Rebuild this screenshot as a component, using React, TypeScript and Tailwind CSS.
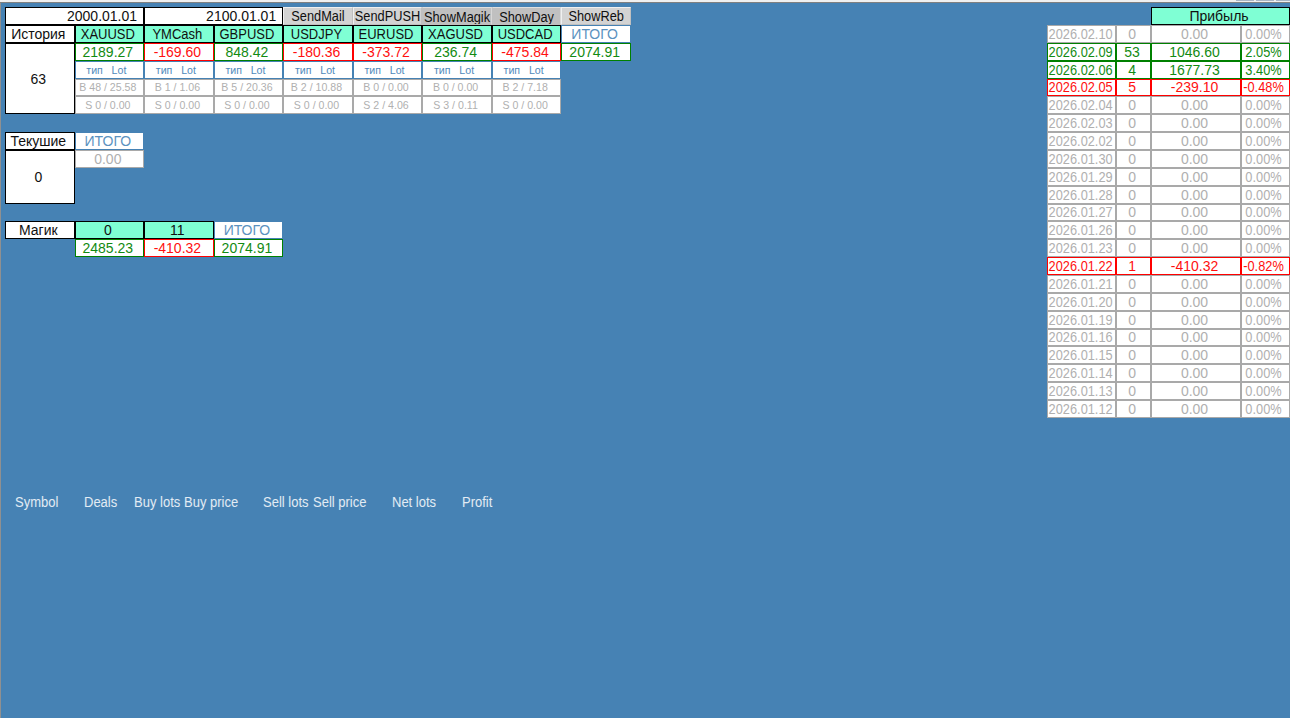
import React from 'react';
import clsx from 'clsx';

type Tone = 'head' | 'plain' | 'profit' | 'loss' | 'muted' | 'total' | 'label';

const toneClass: Record<Tone, string> = {
  head: 'bg-[#7fffd4] border-black text-[#101010]',
  plain: 'bg-white border-black text-[#101010]',
  profit: 'bg-white border-[#008000] text-[#128a12]',
  loss: 'bg-white border-[#ff0000] text-[#ff1010]',
  muted: 'bg-white border-[#a9a9a9] text-[#b0b0b0]',
  total: 'bg-white border-[#4682b4] text-[#5b92c0]',
  label: 'bg-white border-[#4682b4] text-[#5089ba]',
};

const symbols = [
  { name: 'XAUUSD', profit: '2189.27', buy: 'B 48 / 25.58', sell: 'S 0 / 0.00' },
  { name: 'YMCash', profit: '-169.60', buy: 'B 1 / 1.06', sell: 'S 0 / 0.00' },
  { name: 'GBPUSD', profit: '848.42', buy: 'B 5 / 20.36', sell: 'S 0 / 0.00' },
  { name: 'USDJPY', profit: '-180.36', buy: 'B 2 / 10.88', sell: 'S 0 / 0.00' },
  { name: 'EURUSD', profit: '-373.72', buy: 'B 0 / 0.00', sell: 'S 2 / 4.06' },
  { name: 'XAGUSD', profit: '236.74', buy: 'B 0 / 0.00', sell: 'S 3 / 0.11' },
  { name: 'USDCAD', profit: '-475.84', buy: 'B 2 / 7.18', sell: 'S 0 / 0.00' },
];

const days: [string, string, string, string][] = [
  ['2026.02.10', '0', '0.00', '0.00%'],
  ['2026.02.09', '53', '1046.60', '2.05%'],
  ['2026.02.06', '4', '1677.73', '3.40%'],
  ['2026.02.05', '5', '-239.10', '-0.48%'],
  ['2026.02.04', '0', '0.00', '0.00%'],
  ['2026.02.03', '0', '0.00', '0.00%'],
  ['2026.02.02', '0', '0.00', '0.00%'],
  ['2026.01.30', '0', '0.00', '0.00%'],
  ['2026.01.29', '0', '0.00', '0.00%'],
  ['2026.01.28', '0', '0.00', '0.00%'],
  ['2026.01.27', '0', '0.00', '0.00%'],
  ['2026.01.26', '0', '0.00', '0.00%'],
  ['2026.01.23', '0', '0.00', '0.00%'],
  ['2026.01.22', '1', '-410.32', '-0.82%'],
  ['2026.01.21', '0', '0.00', '0.00%'],
  ['2026.01.20', '0', '0.00', '0.00%'],
  ['2026.01.19', '0', '0.00', '0.00%'],
  ['2026.01.16', '0', '0.00', '0.00%'],
  ['2026.01.15', '0', '0.00', '0.00%'],
  ['2026.01.14', '0', '0.00', '0.00%'],
  ['2026.01.13', '0', '0.00', '0.00%'],
  ['2026.01.12', '0', '0.00', '0.00%'],
];

const buttons = [
  { label: 'SendMail', pressed: false },
  { label: 'SendPUSH', pressed: false },
  { label: 'ShowMagik', pressed: true },
  { label: 'ShowDay', pressed: true },
  { label: 'ShowReb', pressed: false },
];

// Column starts are uneven, so every heading carries its own width.
const positionColumns = [
  { label: 'Symbol', className: 'w-[69px]' },
  { label: 'Deals', className: 'w-[50px]' },
  { label: 'Buy lots', className: 'w-[50px]' },
  { label: 'Buy price', className: 'w-[79px]' },
  { label: 'Sell lots', className: 'w-[50px]' },
  { label: 'Sell price', className: 'w-[79px]' },
  { label: 'Net lots', className: 'w-[70px]' },
  { label: 'Profit', className: 'w-[50px]' },
];

const toneOf = (value: string): Tone => {
  const n = parseFloat(value);
  if (n > 0) return 'profit';
  return n < 0 ? 'loss' : 'muted';
};

type CellProps = {
  tone: Tone;
  tall?: boolean;
  className?: string;
  children: React.ReactNode;
};

const valueText = 'justify-center pr-[3px] text-[14px]';
const nameText = 'justify-center pt-[1.4px] pr-[3px] text-[13px]';
const smallText = 'justify-center pr-[3px] text-[10.6px]';

const Cell: React.FC<CellProps> = ({ tone, tall, className = valueText, children }) => (
  <div className={clsx('flex items-center border whitespace-pre leading-none', toneClass[tone], className)}>
    <span className={clsx(tall && 'scale-y-110')}>{children}</span>
  </div>
);

const ChartButton: React.FC<{ label: string; pressed: boolean }> = ({ label, pressed }) => (
  <button
    className={clsx(
      'flex items-center justify-center overflow-hidden border whitespace-nowrap text-[12.8px] leading-none text-[#101010]',
      pressed
        ? 'border-t-[#e0e0e0] border-r-[#d8d8d8] border-b-[#c0c0c0] border-l-[#c0c0c0] bg-[#c0c0c0] pt-[4px]'
        : 'border-t-[#f0f0f0] border-r-[#c0c0c0] border-b-[#c0c0c0] border-l-[#f0f0f0] bg-[#d3d3d3] pt-[2.8px]',
    )}
  >
    <span className="scale-y-110">{label}</span>
  </button>
);

const HistoryTable = () => (
  <div className="grid w-max grid-cols-[repeat(9,69.55px)] auto-rows-[17.87px]">
    <Cell tone="plain" className="col-span-2 justify-end pr-[6px] text-[14px]">2000.01.01</Cell>
    <Cell tone="plain" className="col-span-2 justify-end pr-[6px] text-[14px]">2100.01.01</Cell>
    {buttons.map((b) => (
      <ChartButton key={b.label} label={b.label} pressed={b.pressed} />
    ))}

    <Cell tone="plain">История</Cell>
    {symbols.map((s) => (
      <Cell key={s.name} tone="head" tall className={nameText}>{s.name}</Cell>
    ))}
    <Cell tone="total">ИТОГО</Cell>

    <Cell tone="plain" className={clsx('row-span-4', valueText)}>63</Cell>
    {symbols.map((s) => (
      <Cell key={s.name} tone={toneOf(s.profit)}>{s.profit}</Cell>
    ))}
    <Cell tone="profit">2074.91</Cell>

    {symbols.map((s) => (
      <Cell key={s.name} tone="label" className="justify-center pt-[0.6px] pr-[6px] text-[10.6px]">{'тип   Lot'}</Cell>
    ))}
    {symbols.map((s, i) => (
      <Cell key={s.name} tone="muted" tall className={clsx(smallText, i === 0 && 'col-start-2')}>{s.buy}</Cell>
    ))}
    {symbols.map((s, i) => (
      <Cell key={s.name} tone="muted" tall className={clsx(smallText, i === 0 && 'col-start-2')}>{s.sell}</Cell>
    ))}
  </div>
);

const CurrentTable = () => (
  <div className="mt-[17.87px] grid w-max grid-cols-[repeat(2,69.55px)] auto-rows-[17.87px]">
    <Cell tone="plain">Текушие</Cell>
    <Cell tone="total">ИТОГО</Cell>
    <Cell tone="plain" className={clsx('row-span-3', valueText)}>0</Cell>
    <Cell tone="muted">0.00</Cell>
  </div>
);

const MagicTable = () => (
  <div className="mt-[17.87px] grid w-max grid-cols-[repeat(4,69.55px)] auto-rows-[17.87px]">
    <Cell tone="plain">Магик</Cell>
    <Cell tone="head">0</Cell>
    <Cell tone="head">11</Cell>
    <Cell tone="total">ИТОГО</Cell>
    <Cell tone="profit" className={clsx('col-start-2', valueText)}>2485.23</Cell>
    <Cell tone="loss">-410.32</Cell>
    <Cell tone="profit">2074.91</Cell>
  </div>
);

const DailyTable = () => (
  <div className="grid w-max grid-cols-[69.6px_34.8px_90px_49px] auto-rows-[17.87px]">
    <Cell tone="head" className={clsx('col-span-2 col-start-3', valueText)}>Прибыль</Cell>
    {days.map(([date, deals, profit, percent]) => {
      const tone = toneOf(profit);
      return (
        <React.Fragment key={date}>
          <Cell tone={tone} tall className="col-start-1 justify-start pt-[2.6px] pl-[1px] text-[12.8px]">{date}</Cell>
          <Cell tone={tone}>{deals}</Cell>
          <Cell tone={tone}>{profit}</Cell>
          <Cell tone={tone} tall className="justify-center pt-[2.6px] pr-[4px] text-[12.8px]">{percent}</Cell>
        </React.Fragment>
      );
    })}
  </div>
);

const TitleEdge = () => (
  <div className="flex h-[3px] justify-end gap-[2px] border-b border-[#808080] bg-[#f0f0f0]">
    <div className="h-px w-[18px] bg-[#a8b4c4]" />
    <div className="h-px w-[18px] bg-[#a8b4c4]" />
    <div className="h-px w-[14px] bg-[#a8b4c4]" />
  </div>
);

export default function App() {
  return (
    <div className="flex h-[718px] w-[1290px] flex-col overflow-hidden bg-[#4682b4] font-['Liberation_Sans',Arial,sans-serif]">
      <TitleEdge />
      <div className="flex flex-1 flex-col border-l border-[#909090]">
        <div className="flex h-[490px] justify-between pt-[4.1px] pl-[4px]">
          <div>
            <HistoryTable />
            <CurrentTable />
            <MagicTable />
          </div>
          <DailyTable />
        </div>
        <div className="flex pl-[14px] text-[13px] leading-[20px] whitespace-nowrap text-white/85">
          {positionColumns.map((c) => (
            <div key={c.label} className={clsx('scale-y-110', c.className)}>{c.label}</div>
          ))}
        </div>
      </div>
    </div>
  );
}
